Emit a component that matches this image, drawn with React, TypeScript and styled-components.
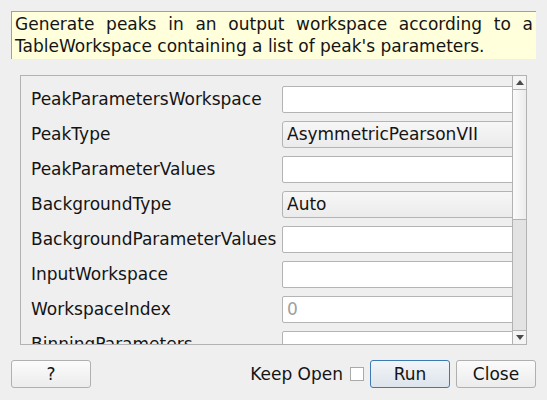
import React from "react";
import styled, { createGlobalStyle } from "styled-components";

const Global = createGlobalStyle`
  html, body { margin: 0; padding: 0; background: #efefef; }
  body { font-family: "DejaVu Sans", "Liberation Sans", sans-serif; font-size: 17px; color: #141414; }
  * { box-sizing: border-box; }
`;

const Dialog = styled.div`
  width: 547px;
  height: 400px;
  display: flex;
  flex-direction: column;
  padding: 11px 11px 12px 11px;
  background: #efefef;
`;

const Description = styled.div`
  background: #ffffdc;
  border-top: 1px solid #a0a0a0;
  border-left: 1px solid #a0a0a0;
  padding: 1px 3px 2px 3px;
  line-height: 22px;
  text-align: justify;
`;

const Frame = styled.div`
  margin: 16px 9px 0 9px;
  height: 270px;
  border: 1px solid #b2b2b2;
  display: flex;
`;

const Viewport = styled.div`
  flex: 1;
  overflow: hidden;
  padding: 10px 0 0 10px;
`;

const Form = styled.div`
  display: grid;
  grid-template-columns: 251px 240px;
  row-gap: 8px;
  align-items: center;
`;

const Label = styled.div`
  white-space: nowrap;
  line-height: 27px;
`;

const TextField = styled.div<{ $placeholder?: boolean }>`
  height: 27px;
  background: #ffffff;
  border: 1px solid #b4b4b4;
  border-radius: 2px;
  padding-left: 4px;
  line-height: 25px;
  color: ${(p) => (p.$placeholder ? "#a0a0a0" : "#141414")};
`;

const Combo = styled.div`
  height: 27px;
  background: linear-gradient(#f7f7f7, #ebebeb);
  border: 1px solid #b4b4b4;
  border-radius: 3px;
  padding-left: 4px;
  line-height: 25px;
`;

const ScrollBar = styled.div`
  width: 14px;
  border-left: 1px solid #b2b2b2;
  display: flex;
  flex-direction: column;
`;

const ArrowButton = styled.div<{ $down?: boolean }>`
  height: 14px;
  flex: none;
  display: flex;
  align-items: center;
  justify-content: center;
  background: #f4f4f4;
  ${(p) => (p.$down ? "border-top: 1px solid #b2b2b2;" : "border-bottom: 1px solid #b2b2b2;")}
`;

const Handle = styled.div`
  height: 130px;
  flex: none;
  background: linear-gradient(90deg, #fbfbfb, #ececec);
  border-bottom: 1px solid #b2b2b2;
`;

const Trough = styled.div`
  flex: 1;
  background: #e3e3e3;
`;

const Footer = styled.div`
  margin-top: 15px;
  display: flex;
  align-items: center;
`;

const Button = styled.button<{ $default?: boolean }>`
  width: 80px;
  height: 28px;
  font-family: "DejaVu Sans", "Liberation Sans", sans-serif;
  font-size: 17px;
  color: #141414;
  border-radius: 3px;
  border: 1px solid ${(p) => (p.$default ? "#3d7ab3" : "#b0b0b0")};
  background: ${(p) =>
    p.$default ? "linear-gradient(#f2f5f8, #dde4eb)" : "linear-gradient(#fbfbfb, #ececec)"};
  padding: 0;
  line-height: 26px;
`;

const Spacer = styled.div`
  flex: 1;
`;

const KeepOpen = styled.span`
  margin-right: 7px;
`;

const CheckBox = styled.div`
  width: 14px;
  height: 14px;
  background: #ffffff;
  border: 1px solid #aaaaaa;
  margin-right: 6px;
`;

const Gap = styled.div`
  width: 6px;
`;

const Arrow = ({ down }: { down?: boolean }) => (
  <svg width="8" height="5" viewBox="0 0 8 5">
    <polygon points={down ? "0,0 8,0 4,5" : "0,5 8,5 4,0"} fill="#4a4a4a" />
  </svg>
);

type Row = { label: string; kind: "text" | "combo"; value?: string; placeholder?: string };

const rows: Row[] = [
  { label: "PeakParametersWorkspace", kind: "text" },
  { label: "PeakType", kind: "combo", value: "AsymmetricPearsonVII" },
  { label: "PeakParameterValues", kind: "text" },
  { label: "BackgroundType", kind: "combo", value: "Auto" },
  { label: "BackgroundParameterValues", kind: "text" },
  { label: "InputWorkspace", kind: "text" },
  { label: "WorkspaceIndex", kind: "text", placeholder: "0" },
  { label: "BinningParameters", kind: "text" },
  { label: "NumberWidths", kind: "text" },
];

export default function App() {
  return (
    <>
      <Global />
      <Dialog>
        <Description>
          Generate peaks in an output workspace according to a TableWorkspace containing a list of peak's parameters.
        </Description>
        <Frame>
          <Viewport>
            <Form>
              {rows.map((r) => (
                <React.Fragment key={r.label}>
                  <Label>{r.label}</Label>
                  {r.kind === "combo" ? (
                    <Combo>{r.value}</Combo>
                  ) : (
                    <TextField $placeholder={!!r.placeholder}>{r.placeholder ?? ""}</TextField>
                  )}
                </React.Fragment>
              ))}
            </Form>
          </Viewport>
          <ScrollBar>
            <ArrowButton>
              <Arrow />
            </ArrowButton>
            <Handle />
            <Trough />
            <ArrowButton $down>
              <Arrow down />
            </ArrowButton>
          </ScrollBar>
        </Frame>
        <Footer>
          <Button>?</Button>
          <Spacer />
          <KeepOpen>Keep Open</KeepOpen>
          <CheckBox />
          <Button $default>Run</Button>
          <Gap />
          <Button>Close</Button>
        </Footer>
      </Dialog>
    </>
  );
}
